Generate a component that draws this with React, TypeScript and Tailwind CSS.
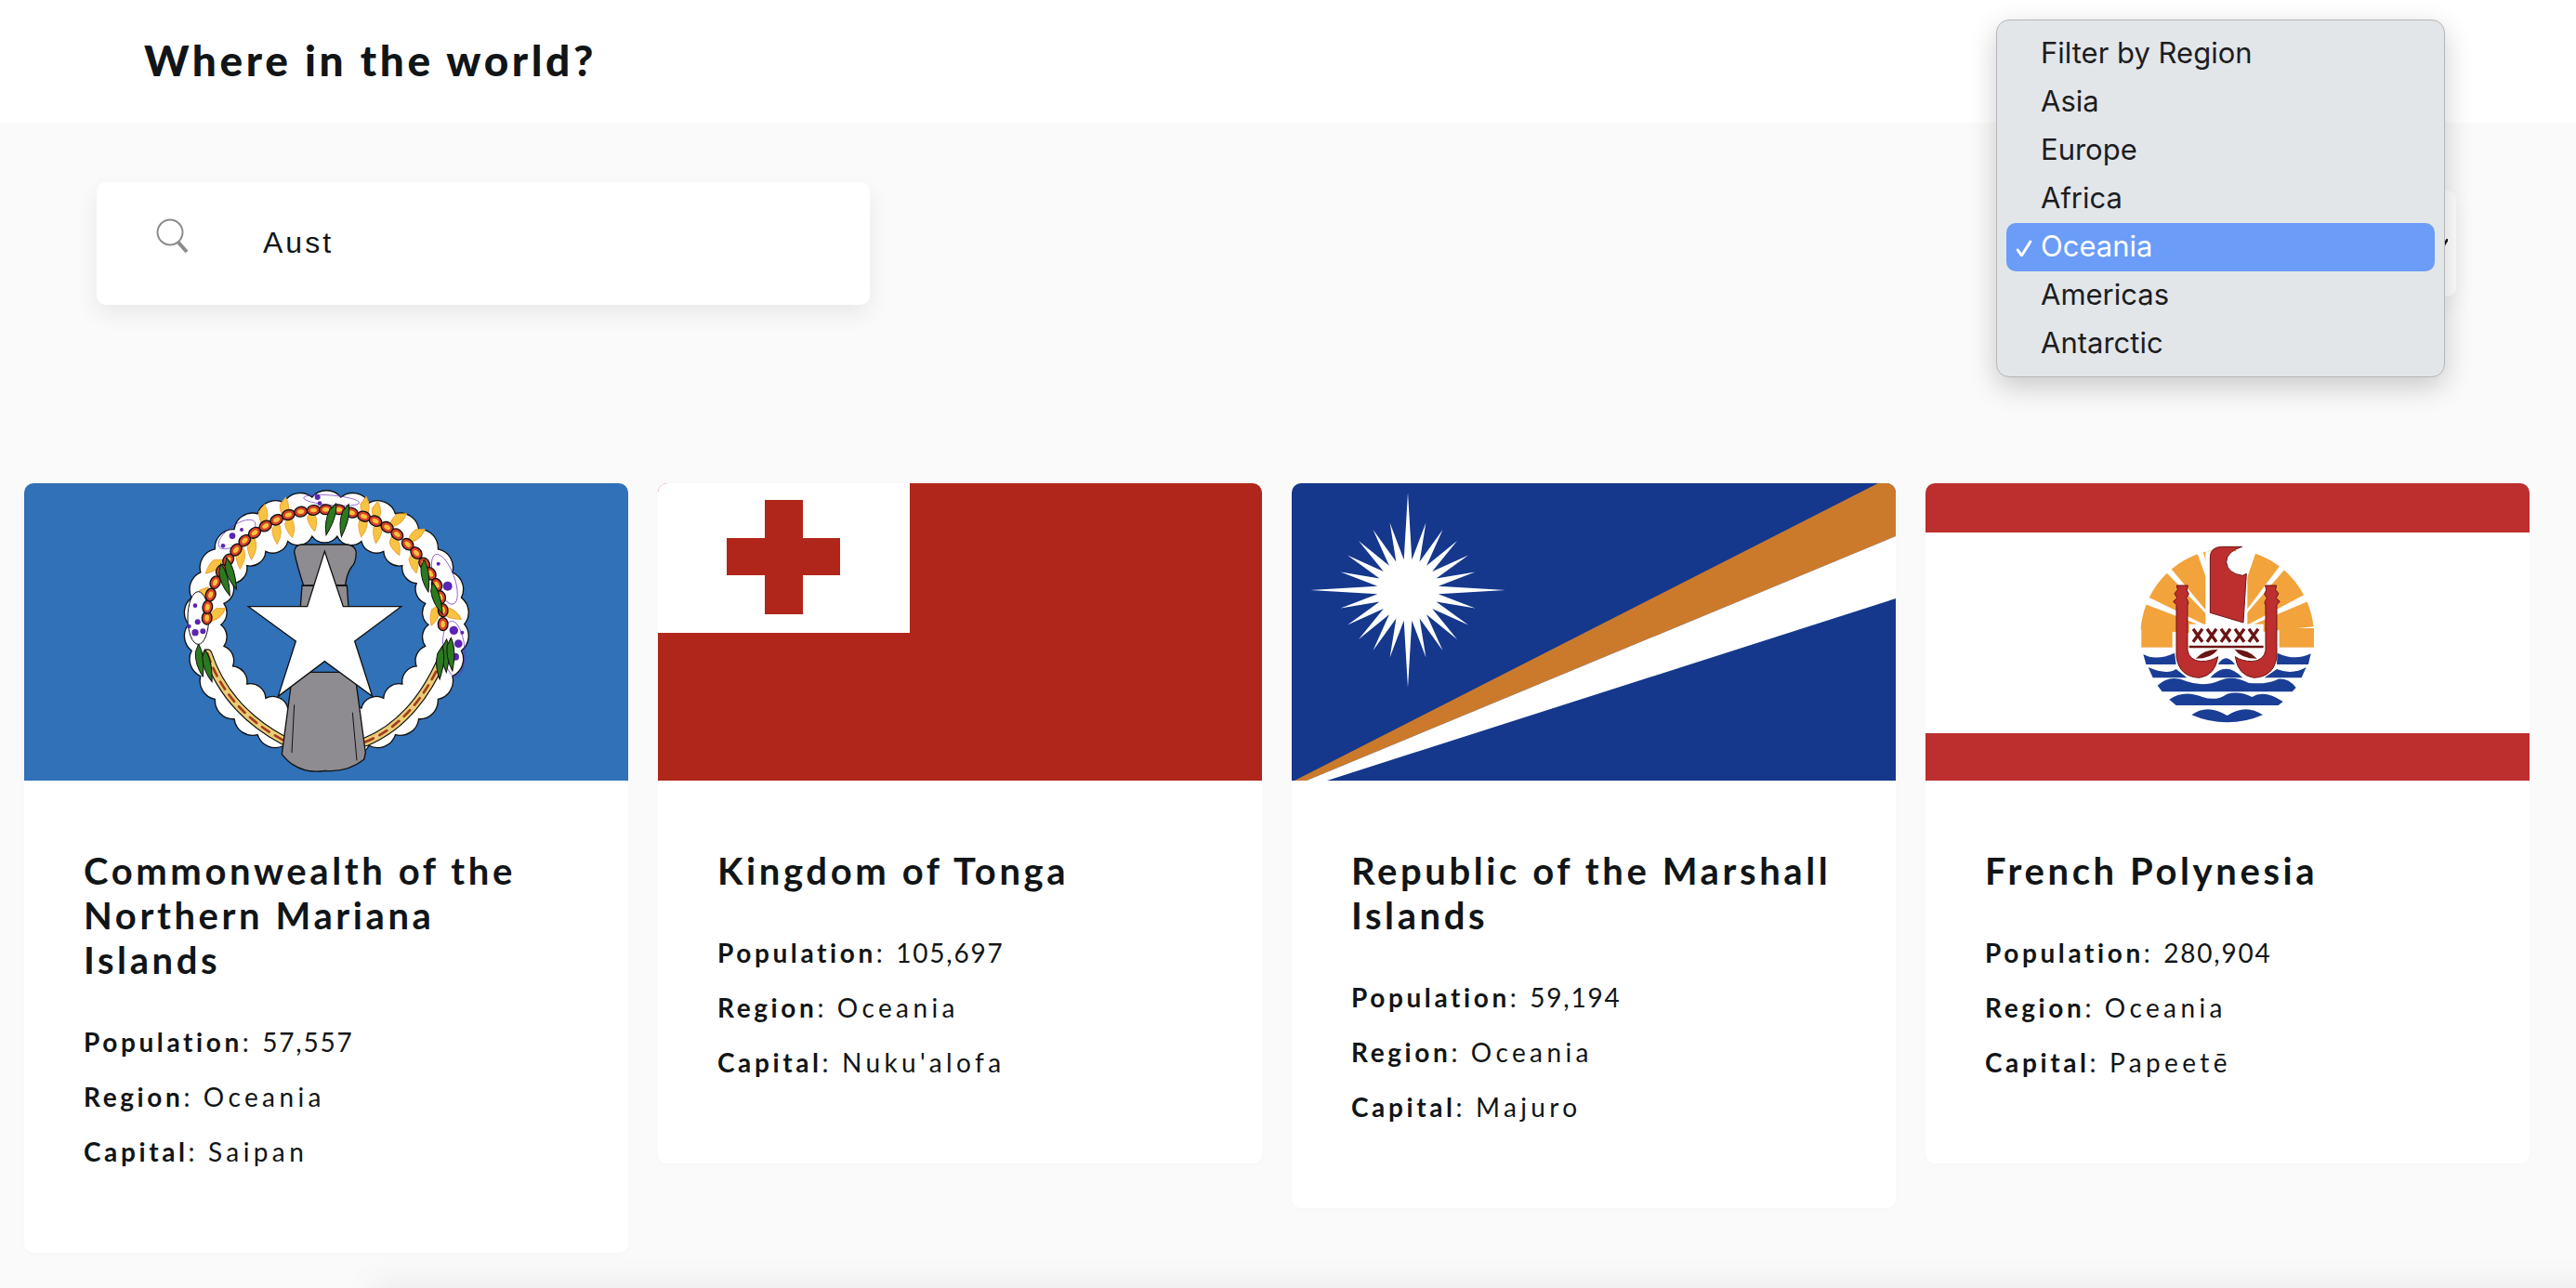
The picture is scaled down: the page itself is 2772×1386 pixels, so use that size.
const countries = [
  { name: "Commonwealth of the Northern Mariana Islands", population: "57,557", capital: "Saipan", flag: "mp" },
  { name: "Kingdom of Tonga", population: "105,697", capital: "Nuku'alofa", flag: "to" },
  { name: "Republic of the Marshall Islands", population: "59,194", capital: "Majuro", flag: "mh" },
  { name: "French Polynesia", population: "280,904", capital: "Papeetē", flag: "pf" },
]

const regions = ["Filter by Region", "Asia", "Europe", "Africa", "Oceania", "Americas", "Antarctic"]

// scalloped closed ring edge, used for the Mariana wreath
const scallop = (cx: number, cy: number, rx: number, ry: number, n: number, r: number, sweep: number) => {
  let d = ""
  for (let i = 0; i <= n; i++) {
    const a = (i / n) * Math.PI * 2
    const x = (cx + rx * Math.cos(a)).toFixed(1)
    const y = (cy + ry * Math.sin(a)).toFixed(1)
    d += i === 0 ? `M${x} ${y}` : `A${r} ${r} 0 0 ${sweep} ${x} ${y}`
  }
  return d + "Z"
}

const beads = [
  [188, 465], [190, 430], [200, 390], [215, 350], [235, 312], [257, 278], [282, 245], [310, 215], [342, 190],
  [377, 168], [413, 148], [451, 132], [491, 122], [532, 117], [572, 115], [614, 115], [655, 125], [695, 137],
  [732, 152], [770, 172], [802, 195], [836, 227], [864, 255], [890, 290], [910, 322], [930, 358], [942, 398],
  [950, 440], [950, 485],
]

const petals = [
  [530, 150, 0], [415, 190, 10], [458, 170, 0], [335, 240, 15], [298, 270, 15], [212, 298, 60], [172, 395, 40],
  [218, 455, 60], [372, 135, 10], [440, 112, 10], [700, 110, 10], [737, 125, 10], [693, 168, 20], [740, 188, 20],
  [803, 150, 60], [797, 228, -10], [862, 200, 60], [858, 285, 0], [925, 455, 30], [978, 450, -50],
]

const purple = [
  [270, 200, 10], [240, 232, 7], [300, 180, 6], [545, 75, 9], [552, 95, 7], [150, 425, 7], [158, 478, 9],
  [130, 492, 7], [150, 512, 11], [175, 508, 9], [965, 362, 15], [935, 290, 6], [985, 505, 14], [1000, 548, 13],
  [990, 590, 12], [1012, 512, 6],
]

const leaves = [
  [585, 148, 25], [630, 152, 20], [245, 345, -8], [265, 325, -10], [165, 605, 0], [190, 622, -5],
  [893, 332, 0], [930, 405, -10], [958, 590, 8], [940, 612, 12], [975, 585, 5],
]

const MarianaFlag = () => (
  <svg viewBox="0 0 650 320" className="block w-full h-[320px]">
    <rect width="650" height="320" fill="#3071b8" />
    <g transform="translate(134 -10) scale(.33333)">
      <path
        fillRule="evenodd"
        fill="#fff"
        stroke="#111"
        strokeWidth="4"
        d={scallop(574, 485, 445, 412, 30, 60, 1) + scallop(568, 487, 335, 288, 26, 50, 0)}
      />
      {petals.map(([x, y, r], i) => (
        <path key={i} transform={`translate(${x} ${y}) rotate(${r})`} d="M-4 -36Q22 -6 6 36Q-16 12 -18 -10Z" fill="#f8c341" stroke="#eca53c" strokeWidth="3" />
      ))}
      <g fill="none" stroke="#6b2bc0" strokeWidth="2">
        <ellipse cx="285" cy="195" rx="70" ry="30" transform="rotate(-35 285 195)" />
        <ellipse cx="160" cy="465" rx="34" ry="85" fill="#fff" stroke="#111" strokeWidth="3" />
        <ellipse cx="955" cy="340" rx="32" ry="85" transform="rotate(-20 955 340)" />
        <ellipse cx="985" cy="565" rx="35" ry="90" transform="rotate(-5 985 565)" />
        <ellipse cx="590" cy="85" rx="90" ry="16" transform="rotate(5 590 85)" />
      </g>
      {purple.map(([x, y, r], i) => (
        <circle key={i} cx={x} cy={y} r={r} fill="#5c24b2" />
      ))}
      <g fill="none" strokeLinecap="round">
        <path d="M190 580Q250 760 435 860" stroke="#111" strokeWidth="30" />
        <path d="M190 580Q250 760 435 860" stroke="#e9cd74" strokeWidth="23" />
        <path d="M190 580Q250 760 435 860" stroke="#a83a1e" strokeWidth="8" strokeDasharray="28 22" />
        <path d="M700 865Q860 800 950 590" stroke="#111" strokeWidth="30" />
        <path d="M700 865Q860 800 950 590" stroke="#e9cd74" strokeWidth="23" />
        <path d="M700 865Q860 800 950 590" stroke="#a83a1e" strokeWidth="8" strokeDasharray="28 22" />
      </g>
      {beads.map(([x, y], i) => {
        const next = beads[Math.min(i + 1, beads.length - 1)]
        const prev = beads[Math.max(i - 1, 0)]
        const angle = (Math.atan2(next[1] - prev[1], next[0] - prev[0]) * 180) / Math.PI
        return (
          <g key={i} transform={`translate(${x} ${y}) rotate(${angle})`}>
            <ellipse rx="21" ry="16" fill="#d9402a" stroke="#111" strokeWidth="4" />
            <ellipse rx="11" ry="7" fill="#f9c23c" />
          </g>
        )
      })}
      {leaves.map(([x, y, r], i) => (
        <path key={i} transform={`translate(${x} ${y}) rotate(${r})`} d="M-4 -56Q18 -20 10 50Q-16 10 -14 -30Z" fill="#2b7a1f" stroke="#111" strokeWidth="3" />
      ))}
      <path d="M495 360Q505 362 640 360L645 430H490Z" fill="#8e8c90" stroke="#111" strokeWidth="4" />
      <path
        d="M470 252Q472 228 495 228L640 228Q668 230 670 255Q668 290 655 300Q640 320 635 358L500 360Q480 300 470 252Z"
        fill="#8e8c90"
        stroke="#111"
        strokeWidth="4"
      />
      <path d="M465 640L430 905Q450 930 465 938Q510 968 570 958Q640 965 695 922L700 900L665 640Z" fill="#8e8c90" stroke="#111" strokeWidth="4" />
      <path d="M470 745L462 900M658 770L672 925" fill="none" stroke="#111" strokeWidth="3" />
      <path
        d="M568 250L628 428L815 428L665 540L722 718L568 605L418 718L475 540L322 428L512 428Z"
        fill="#fff"
        stroke="#111"
        strokeWidth="4"
      />
    </g>
  </svg>
)

const TongaFlag = () => (
  <svg viewBox="0 0 650 320" className="block w-full h-[320px]">
    <rect width="650" height="320" fill="#b0261a" />
    <rect width="271" height="161" fill="#fff" />
    <rect x="115" y="18" width="41" height="123" fill="#b0261a" />
    <rect x="74" y="59" width="122" height="40" fill="#b0261a" />
  </svg>
)

const sunPoints = () => {
  const pts: string[] = []
  for (let i = 0; i < 48; i++) {
    const a = (i / 48) * Math.PI * 2
    let r = 33
    if (i % 2 === 0) r = i % 12 === 0 ? 105 : 75
    pts.push(`${(125 + r * Math.cos(a)).toFixed(1)},${(115 + r * Math.sin(a)).toFixed(1)}`)
  }
  return pts.join(" ")
}

const MarshallFlag = () => (
  <svg viewBox="0 0 650 320" className="block w-full h-[320px]">
    <rect width="650" height="320" fill="#15388c" />
    <polygon points="3,320 631,0 650,0 650,57 16,320" fill="#cb7a2c" />
    <polygon points="16,320 650,57 650,124 38,320" fill="#fff" />
    <polygon points={sunPoints()} fill="#fff" />
  </svg>
)

const sector = (a1: number, a2: number, r0: number, r1: number) => {
  const p = (a: number, r: number) => {
    const t = (a * Math.PI) / 180
    return `${(410 + r * Math.cos(t)).toFixed(1)} ${(372 + r * Math.sin(t)).toFixed(1)}`
  }
  return `M${p(a1, r0)}L${p(a1, r1)}A${r1} ${r1} 0 0 1 ${p(a2, r1)}L${p(a2, r0)}Z`
}

const rays = [
  [184, 201], [206, 226], [230, 250], [254, 276], [289, 307], [311, 332], [337, 354],
]

const figures = [315, 360, 405, 450, 495]

const PolynesiaFlag = () => (
  <svg viewBox="0 0 650 320" className="block w-full h-[320px]">
    <rect width="650" height="320" fill="#fff" />
    <rect width="650" height="53" fill="#bd2e2e" />
    <rect y="269" width="650" height="51" fill="#bd2e2e" />
    <g transform="translate(188 40) scale(.33333)">
      {rays.map(([a, b], i) => (
        <path key={i} d={sector(a, b, 40, 280)} fill="#f2a33b" />
      ))}
      <rect x="133" y="348" width="100" height="62" fill="#f2a33b" />
      <rect x="578" y="348" width="112" height="62" fill="#f2a33b" />
      <rect x="287" y="335" width="240" height="80" fill="#fff" />
      <path d="M340 100H475V340H340Z" fill="#fff" />
      <path d="M355 120Q355 85 395 85L458 85Q408 100 407 135Q412 172 460 178L472 172L462 330L355 298Z" fill="#bd2e2e" stroke="#6b1414" strokeWidth="3" />
      <g fill="none" stroke="#6b1414" strokeWidth="10">
        {figures.map((x) => (
          <path key={x} d={`M${x - 15} 350L${x + 15} 392M${x + 15} 350L${x - 15} 392`} />
        ))}
        <path d="M287 408H527" strokeWidth="7" />
      </g>
      <path d="M308 446Q335 416 380 416Q360 446 308 446ZM506 446Q479 416 434 416Q454 446 506 446Z" fill="#6b1414" />
      <g>
        <path d="M139 432Q180 455 240 428L245 465H148ZM680 430Q630 455 572 428L570 465H672Z" fill="#1a3e96" />
        <path d="M380 465Q405 425 435 465ZM155 474Q215 500 245 480L280 508H170ZM355 508Q405 450 460 508ZM530 508L570 480Q620 500 665 474L650 508Z" fill="#1a3e96" />
        <path d="M185 533Q225 495 280 520Q335 540 390 515Q430 500 480 525Q540 530 575 512Q610 510 632 540L620 553H200Z" fill="#1a3e96" />
        <path d="M223 578Q270 545 330 570Q375 585 410 560Q450 550 490 570Q530 545 590 585L575 597H245Z" fill="#1a3e96" />
        <path d="M295 628Q345 590 410 630Q470 590 525 628Q470 652 410 652Q350 652 295 628Z" fill="#1a3e96" />
      </g>
      <g fill="#bd2e2e" stroke="#6b1414" strokeWidth="3">
        <path d="M247 210H283L280 225L286 238L278 250L285 265L282 275V420Q288 452 325 455Q358 455 380 440Q372 500 320 508Q255 505 246 440V272L236 262L248 250L240 236L250 224Z" />
        <path d="M569 210H533L536 225L530 238L538 250L531 265L534 275V420Q528 452 491 455Q458 455 436 440Q444 500 496 508Q561 505 570 440V272L580 262L568 250L576 236L566 224Z" />
      </g>
    </g>
  </svg>
)

const flags: Record<string, () => React.JSX.Element> = {
  mp: MarianaFlag,
  to: TongaFlag,
  mh: MarshallFlag,
  pf: PolynesiaFlag,
}

const Card = ({ country }: { country: (typeof countries)[number] }) => {
  const Flag = flags[country.flag]
  return (
    <div className="bg-white rounded-[10px] overflow-hidden shadow-[0_2px_10px_rgba(0,0,0,0.015)]">
      <Flag />
      <div className="pt-[73px] pb-[91px] px-16">
        <h2 className="text-[40px] leading-[48px] font-bold tracking-[3.6px] text-[#111517]">{country.name}</h2>
        <div className="mt-[46px] space-y-[23px] text-[28px] leading-9 tracking-[3.6px] text-[#111517]">
          <p><span className="font-bold">Population</span>: <span className="tracking-[1.8px]">{country.population}</span></p>
          <p><span className="font-bold">Region</span>: <span className="tracking-[4.4px]">Oceania</span></p>
          <p><span className="font-bold">Capital</span>: <span className="tracking-[4.4px]">{country.capital}</span></p>
        </div>
      </div>
    </div>
  )
}

export default function App() {
  return (
    <div className="relative h-screen overflow-hidden bg-[#fafafa] font-['Lato',sans-serif]">
      <header className="flex items-center h-[132px] pl-[155px] pb-[3px] bg-white">
        <h1 className="text-[46px] font-black tracking-[3.6px] text-[#111517]">Where in the world?</h1>
      </header>
      <div className="flex items-center justify-between h-[132px] mt-16 pl-[104px] pr-[129px]">
        <div className="flex items-center w-[832px] h-[132px] pl-16 bg-white rounded-[10px] shadow-[0_10px_24px_rgba(0,0,0,0.07)]">
          <svg width="38" height="38" viewBox="0 0 38 38" fill="none" stroke="#8c8c8c" className="mb-[16px]">
            <circle cx="15" cy="15" r="13.5" strokeWidth="2" />
            <path d="M24 26L33 36" strokeWidth="4" />
          </svg>
          <span className="ml-[77px] mb-[3px] font-['Liberation_Sans',sans-serif] text-[32px] tracking-[3px] text-[#111517]">Aust</span>
        </div>
        <div className="flex items-center justify-end w-[400px] h-[114px] pr-[9px] bg-white rounded-[10px] shadow-[0_10px_24px_rgba(0,0,0,0.05)]">
          <svg width="6" height="10" viewBox="0 0 6 10"><path d="M0 10L6 0" stroke="#111" strokeWidth="2.5" /></svg>
        </div>
      </div>
      <main className="grid grid-cols-4 gap-8 items-start mt-[192px] pl-[26px] pr-[50px]">
        {countries.map((c) => (
          <Card key={c.name} country={c} />
        ))}
      </main>
      <div className="absolute left-[400px] -right-[100px] -bottom-[20px] h-[20px] shadow-[0_0_36px_rgba(0,0,0,0.1)]" />
      <div className="absolute left-[2148px] top-[21px] w-[483px] h-[385px] pt-[10px] pl-[10px] pr-[10px] rounded-[14px] border border-[#b4b6b9] bg-[#e3e6e9] shadow-[0_10px_30px_rgba(0,0,0,0.2)] font-['Inter',sans-serif] text-[31px] text-[#1d1d1f]">
        {regions.map((r) =>
          r === "Oceania" ? (
            <div key={r} className="relative flex items-center h-[52px] pl-[37px] pb-[2px] rounded-[10px] bg-[#6a9cf8] text-white">
              <svg width="18" height="18" viewBox="0 0 18 18" fill="none" stroke="#fff" strokeWidth="3" className="absolute left-[10px] top-[18px]">
                <path d="M1.5 10L6.5 17L16.5 1" />
              </svg>
              {r}
            </div>
          ) : (
            <div key={r} className="flex items-center h-[52px] pl-[37px] pb-[2px]">{r}</div>
          ),
        )}
      </div>
    </div>
  )
}
